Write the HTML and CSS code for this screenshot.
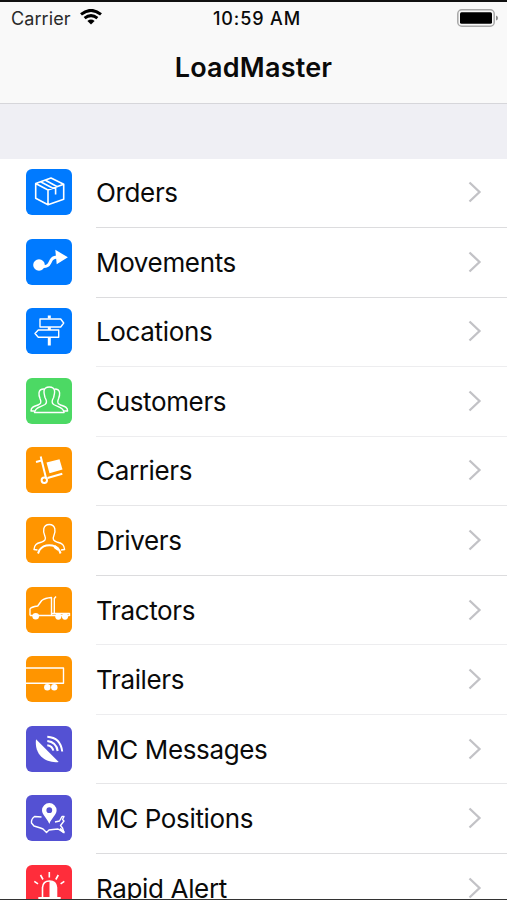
FILE: index.html
```
<!DOCTYPE html>
<html lang="en">
  <head>
    <meta charset="UTF-8" />
    <meta name="viewport" content="width=device-width, initial-scale=1.0" />
    <title>LoadMaster</title>
    <link rel="stylesheet" href="styles.css">
  </head>
  <body>
    <header>
      <div class="status-bar">
        <div class="carrier">
          <span>Carrier</span>
          <svg class="wifi" width="22" height="16" viewBox="0 0 22 16">
            <path d="M1 5.4Q11-2.600 21 5.4" />
            <path d="M4.6 9.200Q11 4 17.4 9.200" />
            <path class="fill" d="M7.4 12Q11 9.200 14.6 12L11 15.6Z" />
          </svg>
        </div>
        <span class="time">10:59 AM</span>
        <svg class="battery" width="42" height="18" viewBox="0 0 42 18">
          <rect x=".8" y=".8" width="36.4" height="16.4" rx="4" fill="none" stroke="#a8a8a8" stroke-width="1.5" />
          <rect x="3" y="3.3" width="32" height="11.5" rx="1.5" />
          <path d="M39 6.5Q41 7 41 9T39 11.5Z" fill="#8a8a8a" />
        </svg>
      </div>
      <h1>LoadMaster</h1>
    </header>
    <main>
      <ul class="menu">
        <li class="menu-item">
          <svg class="icon blue" viewBox="0 0 46 46">
            <path d="M25 9L9.7 14.5V29.3L22 35.7L37.7 30.3V15.3ZM9.7 14.5L22 21L37.7 15.3M22 21V35.7M14.5 12.8L27 19.2M19 11L31.3 17.7M29.6 18.5V25.5" />
          </svg>
          <span class="label">Orders</span>
          <svg class="chevron" viewBox="0 0 14 22"><path d="M1.5 1.5L11.5 11L1.5 20.5" /></svg>
        </li>
        <li class="menu-item">
          <svg class="icon blue" viewBox="0 0 46 46">
            <circle class="fill" cx="13" cy="26" r="5.8" />
            <path class="thick" d="M13 27C23 29 23 25 25 21.5Q26.5 18 32 18" />
            <path class="fill" d="M29.3 10.8L41.9 18.3L30.7 25.2Z" />
          </svg>
          <span class="label">Movements</span>
          <svg class="chevron" viewBox="0 0 14 22"><path d="M1.5 1.5L11.5 11L1.5 20.5" /></svg>
        </li>
        <li class="menu-item">
          <svg class="icon blue" viewBox="0 0 46 46">
            <path class="thin" d="M14 11H34.7L37.7 15L34.7 19H14ZM32.7 22H12.3L9 25.5L12.3 29.3H32.7Z" />
            <path class="thick" d="M23.3 7.5V10.5M23.3 19V22M23.3 29.3V37.5" />
          </svg>
          <span class="label">Locations</span>
          <svg class="chevron" viewBox="0 0 14 22"><path d="M1.5 1.5L11.5 11L1.5 20.5" /></svg>
        </li>
        <li class="menu-item">
          <svg class="icon green" viewBox="0 0 46 46">
            <path class="thin" d="M23.3 9C15.5 9 18.3 17 19 19.5C21 23 20.5 25.5 19 26.5C15 29 8.8 29 8.5 34.5H38.1C37.8 29 31.6 29 27.6 26.5C26.1 25.5 25.6 23 27.6 19.5C28.3 17 31.1 9 23.3 9Z" />
            <path class="thin" d="M18 11C11 11 13 18 14 20.5C16 25 14.5 26 12 27C8 28.5 5 29 5 33H8.5M28.6 11C35.6 11 33.6 18 32.6 20.5C30.6 25 32.1 26 34.6 27C38.6 28.5 41.6 29 41.6 33H38.1" />
          </svg>
          <span class="label">Customers</span>
          <svg class="chevron" viewBox="0 0 14 22"><path d="M1.5 1.5L11.5 11L1.5 20.5" /></svg>
        </li>
        <li class="menu-item">
          <svg class="icon orange" viewBox="0 0 46 46">
            <path class="medium" d="M10 15L15.5 13.5M14.7 9.5L20 31M21.5 31L36.3 26.8" />
            <circle class="medium" cx="18.3" cy="33.2" r="2.7" />
            <path class="fill" d="M20.5 15.5L33.5 12.3L36.5 22.5L23.5 26.2Z" />
          </svg>
          <span class="label">Carriers</span>
          <svg class="chevron" viewBox="0 0 14 22"><path d="M1.5 1.5L11.5 11L1.5 20.5" /></svg>
        </li>
        <li class="menu-item">
          <svg class="icon orange" viewBox="0 0 46 46">
            <path class="thin" d="M11.5 33L8 32.5C8.5 27.5 10.5 26.5 15 25.3C19 24 20.5 22.5 18.7 18.5C17 15 16.5 7.5 23.3 7.5S29.6 15 27.9 18.5C26.1 22.5 27.6 24 31.6 25.3C36.1 26.5 38.1 27.5 38.6 32.5L35 33" />
            <path class="medium" d="M12 36.5L13.5 33C18 26.5 28.6 26.5 33.1 33L34.6 36.5" />
            <path class="thick" d="M28.5 29.500L32.5 32.5" />
          </svg>
          <span class="label">Drivers</span>
          <svg class="chevron" viewBox="0 0 14 22"><path d="M1.5 1.5L11.5 11L1.5 20.5" /></svg>
        </li>
        <li class="menu-item">
          <svg class="icon orange" viewBox="0 0 46 46">
            <path class="thin" d="M4 28.5V22Q5 20 11.7 19L15.7 13.5Q19 11 25.5 10.5V28M28.3 27V11.5L30 9.5M25.5 26.5H43.5V29M4 28.5H43.5" />
            <circle class="fill" cx="9.7" cy="29.3" r="3.3" />
            <circle class="fill" cx="32.3" cy="29.6" r="3.1" />
            <circle class="fill" cx="39" cy="29.6" r="3.1" />
          </svg>
          <span class="label">Tractors</span>
          <svg class="chevron" viewBox="0 0 14 22"><path d="M1.5 1.5L11.5 11L1.5 20.5" /></svg>
        </li>
        <li class="menu-item">
          <svg class="icon orange" viewBox="0 0 46 46">
            <path class="thin" d="M0 12H37.5V27.3H0" />
            <circle class="fill" cx="21.3" cy="31.3" r="3.2" />
            <circle class="fill" cx="28.3" cy="31.3" r="3.2" />
          </svg>
          <span class="label">Trailers</span>
          <svg class="chevron" viewBox="0 0 14 22"><path d="M1.5 1.5L11.5 11L1.5 20.5" /></svg>
        </li>
        <li class="menu-item">
          <svg class="icon purple" viewBox="0 0 46 46">
            <path class="fill" d="M10 13.3L32.7 36C21 37.5 8 30 10 13.3Z" />
            <path class="medium" d="M21.3 10.7Q34.5 11.5 36.2 25.5M21.3 15Q30.3 16 31.7 25M21.3 19.2Q26.5 20 27.3 24.7" />
          </svg>
          <span class="label">MC Messages</span>
          <svg class="chevron" viewBox="0 0 14 22"><path d="M1.5 1.5L11.5 11L1.5 20.5" /></svg>
        </li>
        <li class="menu-item">
          <svg class="icon purple" viewBox="0 0 46 46">
            <path class="thin" d="M15.500 22L8.5 21.5Q5 24 5.5 28L8 31L14.5 33L17 34L20.5 37.5L23 35L27 34.5L32 34L38 37.7L36.5 33L34.500 30.500L38 26L36.500 24.500L38 21.5H36L33.500 26L29 27" />
            <path class="medium" d="M34 33.5L38 37.500" />
            <path class="fill" fill-rule="evenodd" d="M23.3 29C21 23 16 20 16 15.3A7.3 7.3 0 0 1 30.6 15.3C30.6 20 25.6 23 23.3 29ZM23.3 12.3A2.9 2.9 0 1 0 23.3 18.1A2.9 2.9 0 0 0 23.3 12.3Z" />
          </svg>
          <span class="label">MC Positions</span>
          <svg class="chevron" viewBox="0 0 14 22"><path d="M1.5 1.5L11.5 11L1.5 20.5" /></svg>
        </li>
        <li class="menu-item">
          <svg class="icon red" viewBox="0 0 46 46">
            <path d="M16.5 32V22.5Q17 16 23.5 16T30.5 22.5V32M23.3 7V12.5M14.5 10L17 14.5M32.3 10L29.8 14.5M8.3 16.3L12 18.8M38.3 16.3L34.6 18.8" />
            <path class="fill" d="M23.5 16Q30.5 16 30.5 22.5V32H23.5ZM12.3 32H34.7V36H12.3Z" />
          </svg>
          <span class="label">Rapid Alert</span>
          <svg class="chevron" viewBox="0 0 14 22"><path d="M1.5 1.5L11.5 11L1.5 20.5" /></svg>
        </li>
      </ul>
    </main>
  </body>
</html>
```
FILE: styles.css
```
* {
  box-sizing: border-box;
}
body {
  display: flex;
  flex-direction: column;
  height: 900px;
  margin: 0;
  overflow: hidden;
  border-top: 2px solid #111;
  border-bottom: 1px solid #333;
  background-color: #fff;
  color: #0a0a0a;
  font-family: Inter, "Liberation Sans", sans-serif;
}
header {
  flex: none;
  height: 102px;
  border-bottom: 1px solid #d6d6da;
  background-color: #f9f9f9;
}
.status-bar {
  display: grid;
  grid-template-columns: 1fr auto 1fr;
  align-items: center;
  height: 32px;
  padding: 0 8px 0 11px;
  font-size: 18px;
}
.carrier {
  display: flex;
  align-items: center;
  gap: 9px;
  color: #2a2a2a;
  letter-spacing: 0.1px;
}
.wifi {
  margin-top: -2px;
  fill: none;
  stroke: #000;
  stroke-width: 3;
}
.wifi .fill {
  fill: #000;
  stroke: none;
}
.time {
  padding-left: 4px;
  font-size: 18px;
  font-weight: 500;
  letter-spacing: 0.9px;
}
.battery {
  justify-self: end;
  margin-top: -1px;
}
h1 {
  margin: 0;
  font-size: 27px;
  font-weight: 600;
  letter-spacing: 0.2px;
  line-height: 68px;
  text-align: center;
}
main {
  flex: 1;
  min-height: 0;
  overflow: hidden;
  padding-top: 54.5px;
  background: linear-gradient(#efeff4 55px, #fff 55px);
}
.menu {
  margin: 0;
  padding: 0;
  list-style: none;
}
.menu-item {
  display: flex;
  align-items: center;
  height: 69.55px;
  padding: 0 25px 2px 26px;
  background: linear-gradient(#dcdcde, #dcdcde) 96px 100% / 100% 1px no-repeat;
}
.menu-item:nth-child(3),
.menu-item:nth-child(4),
.menu-item:nth-child(7),
.menu-item:nth-child(8) {
  background-image: linear-gradient(#ededef, #ededef);
}
.menu-item:nth-child(5),
.menu-item:nth-child(9) {
  background-image: linear-gradient(#e6e6e8, #e6e6e8);
}
.icon {
  flex: none;
  width: 46px;
  height: 46px;
  margin-right: 24px;
  border-radius: 6px;
  fill: none;
  stroke: #fff;
  stroke-width: 1.6;
  stroke-linejoin: round;
}
.icon .fill {
  fill: #fff;
  stroke: none;
}
.icon .thin {
  stroke-width: 1.4;
}
.icon .medium {
  stroke-width: 2;
}
.icon .thick {
  stroke-width: 3;
}
.blue {
  background-color: #007aff;
}
.green {
  background-color: #4cd964;
}
.orange {
  background-color: #ff9500;
}
.purple {
  background-color: #5451d3;
}
.red {
  background-color: #ff2d3b;
}
.label {
  flex: 1;
  padding-top: 1px;
  font-size: 26px;
  letter-spacing: -0.35px;
}
.chevron {
  width: 14px;
  height: 22px;
  fill: none;
  stroke: #c2c2c6;
  stroke-width: 2.3;
}
```
